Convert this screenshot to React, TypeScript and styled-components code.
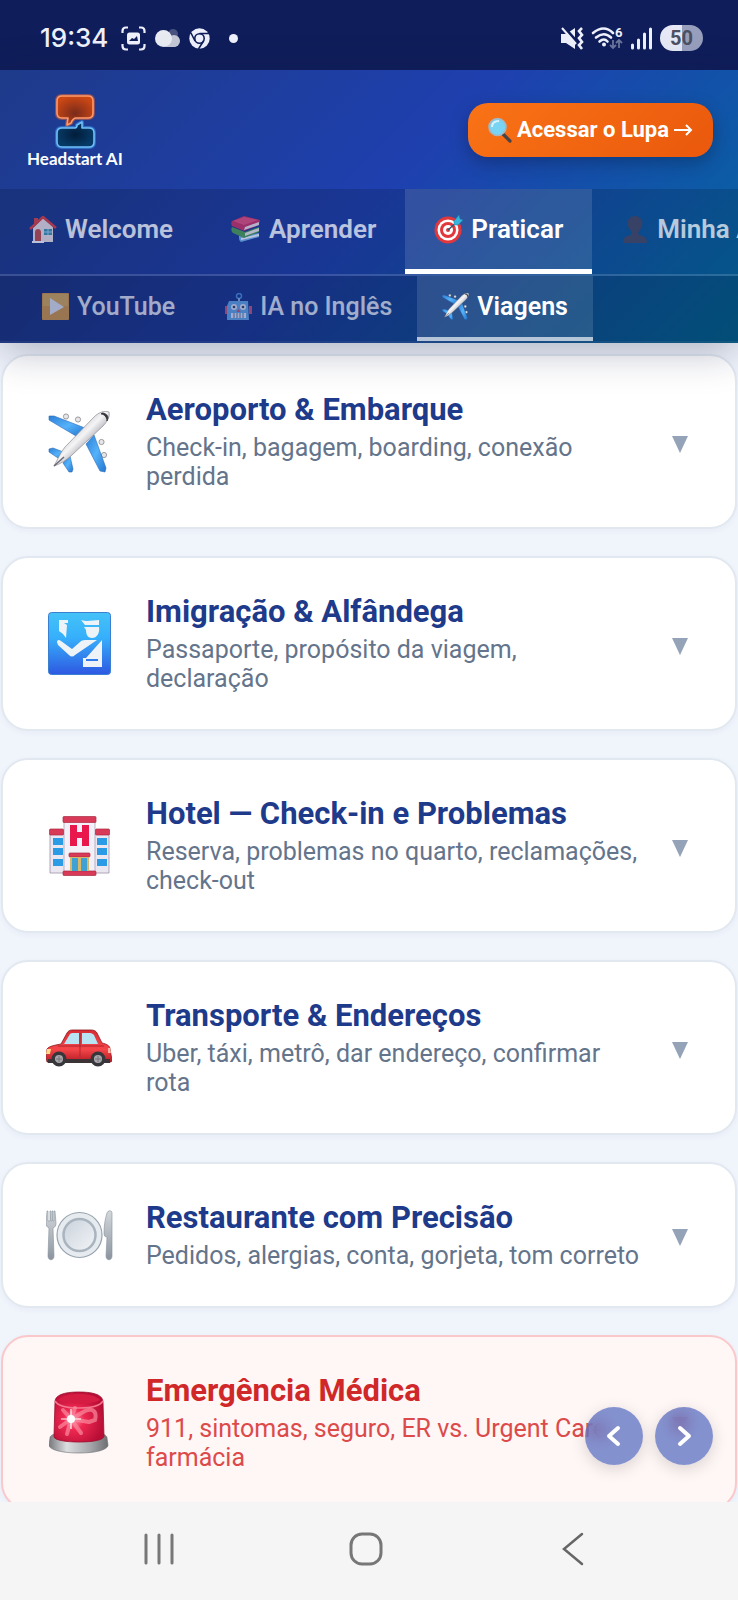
import { ReactNode, useState } from "react";
import styled, { createGlobalStyle } from "styled-components";

const GlobalStyle = createGlobalStyle`
  * {
    box-sizing: border-box;
  }
  body {
    margin: 0;
    background: #f0f4fb;
    font-family: Roboto, "Noto Sans", sans-serif;
  }
  button {
    border: 0;
    padding: 0;
    font-family: inherit;
    cursor: pointer;
  }
  svg {
    display: block;
    flex-shrink: 0;
  }
`;

const Screen = styled.div`
  display: flex;
  flex-direction: column;
  height: 100vh;
  overflow: hidden;
`;

/* ---------- status bar ---------- */
const StatusBar = styled.div`
  display: flex;
  align-items: center;
  justify-content: space-between;
  height: 70px;
  flex-shrink: 0;
  padding: 6px 35px 0 40px;
  background: #0f1d5a;
  color: #eef1fb;
`;
const StatusGroup = styled.div<{ $gap: number }>`
  display: flex;
  align-items: center;
  gap: ${({ $gap }) => $gap}px;
`;
const Clock = styled.span`
  margin-right: 4px;
  font-family: Inter, sans-serif;
  font-size: 26px;
  font-weight: 500;
  line-height: 32px;
`;
const Dot = styled.span`
  width: 9px;
  height: 9px;
  margin-left: 10px;
  border-radius: 50%;
  background: #eef1fb;
`;
const Battery = styled.span`
  width: 43px;
  height: 26px;
  border-radius: 13px;
  background: linear-gradient(90deg, #e6e9f5 50%, #989fbd 50%);
  color: #4c5062;
  font-size: 20px;
  font-weight: 700;
  line-height: 26px;
  text-align: center;
`;

/* ---------- header ---------- */
const Header = styled.header`
  position: relative;
  z-index: 2;
  flex-shrink: 0;
  background: linear-gradient(135deg, #1e3a8a 0%, #1e40af 50%, #0369a1 100%);
  box-shadow: 0 8px 38px rgba(20, 25, 70, 0.3);
`;
const Brand = styled.div`
  display: flex;
  align-items: center;
  justify-content: space-between;
  height: 119px;
  padding: 0 25px 0 27px;
`;
const Logo = styled.a`
  display: flex;
  flex-direction: column;
  align-items: center;
  color: #fff;
  font-family: Lato, sans-serif;
  font-size: 17px;
  font-weight: 700;
  line-height: 18px;
  text-decoration: none;
`;
const LupaButton = styled.button`
  display: flex;
  align-items: center;
  gap: 5px;
  height: 54px;
  padding: 0 20px;
  border-radius: 20px;
  background: linear-gradient(135deg, #f97316, #ea580c);
  box-shadow: 0 6px 18px rgba(0, 0, 0, 0.25);
  color: #fff;
  font-size: 22px;
  font-weight: 700;
  white-space: nowrap;
`;
const Tabs = styled.nav<{ $sub?: boolean }>`
  display: flex;
  overflow: hidden;
  padding-left: ${({ $sub }) => ($sub ? 17 : 0)}px;
  border-bottom: 2px solid rgba(255, 255, 255, ${({ $sub }) => ($sub ? 0.06 : 0.15)});
  background: rgba(0, 0, 0, ${({ $sub }) => ($sub ? 0.25 : 0.15)});
`;
const Tab = styled.a<{ $active?: boolean; $sub?: boolean }>`
  display: flex;
  align-items: center;
  flex-shrink: 0;
  gap: 8px;
  height: ${({ $sub }) => ($sub ? 65 : 85)}px;
  padding: 0 ${({ $sub }) => ($sub ? 25 : 29)}px;
  border-bottom: ${({ $sub }) => ($sub ? 4 : 5)}px solid
    ${({ $active, $sub }) =>
      !$active ? "transparent" : $sub ? "rgba(255, 255, 255, 0.7)" : "#fff"};
  background: ${({ $active }) =>
    $active ? "rgba(255, 255, 255, 0.12)" : "transparent"};
  background-clip: padding-box;
  color: #fff;
  font-size: ${({ $sub }) => ($sub ? 25 : 26)}px;
  font-weight: ${({ $sub, $active }) => ($sub && !$active ? 500 : 600)};
  text-decoration: none;
  white-space: nowrap;

  > * {
    opacity: ${({ $active, $sub }) => ($active ? 1 : $sub ? 0.6 : 0.7)};
  }
`;

/* ---------- topic list ---------- */
const Content = styled.main`
  position: relative;
  flex: 1;
  min-height: 0;
`;
const TopicList = styled.div`
  display: flex;
  flex-direction: column;
  gap: 27px;
  height: 100%;
  padding: 11px 1px 27px;
  overflow-y: auto;
  scrollbar-width: none;
`;
const TopicCard = styled.button<{ $urgent?: boolean }>`
  display: flex;
  align-items: center;
  flex-shrink: 0;
  gap: 20px;
  width: 100%;
  padding: 36px;
  border: 2px solid ${({ $urgent }) => ($urgent ? "#fac8ca" : "#e2e8f0")};
  border-radius: 27px;
  background: ${({ $urgent }) => ($urgent ? "#fff6f6" : "#fff")};
  box-shadow: 0 2px 6px rgba(30, 58, 138, 0.04);
  color: ${({ $urgent }) => ($urgent ? "#dc4a4a" : "#64748b")};
  text-align: left;
`;
const TopicIcon = styled.span`
  display: flex;
  justify-content: center;
  flex-shrink: 0;
  width: 80px;
  margin-right: 7px;
`;
const TopicText = styled.span`
  display: flex;
  flex-direction: column;
  flex: 1;
  gap: 5px;
  min-width: 0;
`;
const TopicTitle = styled.span<{ $urgent?: boolean }>`
  color: ${({ $urgent }) => ($urgent ? "#d02828" : "#1e3a8a")};
  font-size: 31px;
  font-weight: 700;
  line-height: 36px;
`;
const TopicDesc = styled.span`
  font-size: 25px;
  line-height: 29px;
`;
const Chevron = styled.span`
  display: flex;
  justify-content: center;
  flex-shrink: 0;
  width: 38px;
  padding-top: 5px;
`;
const Pager = styled.div`
  position: absolute;
  right: 25px;
  bottom: 37px;
  display: flex;
  gap: 12px;
`;
const PagerButton = styled.button`
  display: flex;
  align-items: center;
  justify-content: center;
  width: 58px;
  height: 58px;
  border-radius: 50%;
  background: rgba(30, 64, 175, 0.55);
  backdrop-filter: blur(8px);
  box-shadow: 0 4px 16px rgba(0, 0, 0, 0.15);
`;

/* ---------- system navigation ---------- */
const SystemNav = styled.div`
  display: flex;
  align-items: center;
  justify-content: space-around;
  flex-shrink: 0;
  height: 98px;
  padding: 0 62px 4px 56px;
  background: #f5f5f5;
`;
const SystemButton = styled.button`
  display: flex;
  justify-content: center;
  width: 60px;
  background: none;
`;

/* ---------- drawings ---------- */
type IconProps = { size?: number };

const Plane = ({ size = 62 }: IconProps) => (
  <svg width={size} height={size} viewBox="0 0 62 62" aria-hidden>
    <defs>
      <linearGradient id="wing" x1="0" y1="0" x2="1" y2="1">
        <stop offset="0" stopColor="#2c7fd6" />
        <stop offset="0.5" stopColor="#55b2fa" />
        <stop offset="1" stopColor="#2375cf" />
      </linearGradient>
      <linearGradient id="hull" x1="0.3" y1="0.3" x2="0.7" y2="0.7">
        <stop offset="0" stopColor="#c9c9cf" />
        <stop offset="0.45" stopColor="#f4f4f5" />
        <stop offset="1" stopColor="#8e8a96" />
      </linearGradient>
    </defs>
    <g fill="#e6e6e9" stroke="#85858c" strokeWidth="0.8">
      <circle cx="18" cy="5.500" r="2.600" />
      <circle cx="30" cy="8.500" r="2.600" />
      <circle cx="53.500" cy="31" r="2.600" />
      <circle cx="56" cy="44" r="2.600" />
    </g>
    <g fill="url(#wing)" stroke="#2a6cb8" strokeWidth="0.6">
      <path d="M1 5h5l31 12-9 8L1 9z" />
      <path d="M57 61l-5-1-14-27 8-9 12 33z" />
      <path d="M1 38l4-1 13 5-5 7L1 41z" />
      <path d="M24 61h-3l-6-9 7-7 3 13z" />
    </g>
    <path
      d="M61 1C56-1 50 2 46 6L17 36C12 42 9 50 6 55c6-2 13-6 18-11l31-29c5-5 7-10 6-14z"
      fill="url(#hull)"
      stroke="#8b8b92"
      strokeWidth="0.7"
    />
    <path d="M53 3c3 0 6 3 6 7l1-3c0-3-3-5-6-5z" fill="#33343a" stroke="#33343a" strokeWidth="0.8" />
    <path d="M16 46L6 55" stroke="#6e6b76" strokeWidth="1.5" />
  </svg>
);

const Customs = () => (
  <svg width="63" height="63" viewBox="0 0 63 63" aria-hidden>
    <defs>
      <linearGradient id="sign" x1="0" y1="0" x2="0" y2="1">
        <stop offset="0" stopColor="#45c2f8" />
        <stop offset="0.4" stopColor="#36b0fb" />
        <stop offset="1" stopColor="#2e58e2" />
      </linearGradient>
    </defs>
    <rect x="0.5" y="0.5" width="62" height="62" rx="3" fill="url(#sign)" stroke="#3b7fd0" />
    <g fill="#eef3f7">
      <path d="M11 8h9v3h-4l3 2-1 13-3-4-4-3z" />
      <path d="M33 8c6 2 12 0 18 0v5H37z" />
      <path d="M36 15h15c1 6-2 11-7 11-4 0-6-3-6-8z" />
      <path d="M9 30c0-2 2-3 4-1l11 8 8-7c2-2 4-2 8-2h9L27 43c-2 2-4 2-6 0L10 33z" />
      <path d="M54 28v27H35V46h3zM38 47h12v2H38z" fillRule="evenodd" />
    </g>
  </svg>
);

const Hotel = () => (
  <svg width="61" height="60" viewBox="0 0 61 60" aria-hidden>
    <path d="M1 18h59v39H1z" fill="#ebe7f1" stroke="#9c93a8" strokeWidth="0.8" />
    <path d="M15 5h31v51H15z" fill="#f4f0f7" stroke="#aaa2b4" strokeWidth="0.8" />
    <g fill="#d93a57" stroke="#a92b45" strokeWidth="0.7">
      <rect x="14" y="0.5" width="33" height="6" rx="1" />
      <rect x="0.5" y="13" width="14" height="6" rx="1" />
      <rect x="46.5" y="13" width="14" height="6" rx="1" />
      <rect x="20" y="37" width="21" height="4" rx="1" />
      <rect x="14" y="55" width="33" height="4.5" rx="1" />
    </g>
    <path d="M21 9h7v7h5V9h7v21h-7v-8h-5v8h-7z" fill="#e8184c" />
    <path
      d="M4 22h10v7H4zM4 32h10v7H4zM4 43h10v7H4zM48 22h10v7H48zM48 32h10v7H48zM48 43h10v7H48z"
      fill="#2c9be6"
    />
    <path d="M21 41h19v14H21z" fill="#d8b96b" />
    <path d="M23 42h6v13h-6zM32 42h6v13h-6z" fill="#3fa1d4" />
  </svg>
);

const Car = () => (
  <svg width="66" height="38" viewBox="0 0 66 38" aria-hidden>
    <defs>
      <linearGradient id="paint" x1="0" y1="0" x2="0" y2="1">
        <stop offset="0" stopColor="#d92b33" />
        <stop offset="0.6" stopColor="#f5474a" />
        <stop offset="1" stopColor="#b51a24" />
      </linearGradient>
    </defs>
    <path
      d="M1 33l-1-5 1-8c2-3 9-4 14-5l6-11c1-2 3-3 5-3h19c3 0 5 1 6 3l5 10c5 1 8 3 8 6l2 11c0 2-1 2-3 2z"
      fill="url(#paint)"
      stroke="#8d1820"
      strokeWidth="0.8"
    />
    <path d="M2 30h62v4H2z" fill="#3b3336" />
    <path d="M18 15l6-10c1-1 2-1 3-1h6v11zM36 4h8c2 0 3 1 4 2l4 9H36z" fill="#b8e3f2" />
    <path d="M34 4v24M12 17h46" stroke="#b3252e" strokeWidth="1" />
    <path d="M1 20h4l-1 5H0z" fill="#ffd88a" />
    <path d="M62 19h2l1 5h-3z" fill="#ffb3a0" />
    <g fill="#a9a6ab" stroke="#37373b" strokeWidth="3.5">
      <circle cx="13" cy="30" r="5.8" />
      <circle cx="52" cy="30" r="5.8" />
    </g>
    <path d="M10 30h6M13 27v6M49 30h6M52 27v6" stroke="#77757b" />
  </svg>
);

const Plate = () => (
  <svg width="67" height="51" viewBox="0 0 67 51" aria-hidden>
    <defs>
      <linearGradient id="china" x1="0" y1="0" x2="1" y2="1">
        <stop offset="0" stopColor="#c9d1da" />
        <stop offset="1" stopColor="#f2f5f8" />
      </linearGradient>
      <linearGradient id="steel" x1="0" y1="0" x2="0" y2="1">
        <stop offset="0" stopColor="#d4d8dc" />
        <stop offset="1" stopColor="#8b949f" />
      </linearGradient>
    </defs>
    <circle cx="33.5" cy="25" r="22.5" fill="#e6ebf0" stroke="#98a3af" strokeWidth="1.2" />
    <circle cx="33.5" cy="25" r="16" fill="url(#china)" stroke="#aab4bf" strokeWidth="2.5" />
    <g fill="url(#steel)" stroke="#87909a" strokeWidth="0.6">
      <path d="M1 1h1v10h2V1h1v10h1V1h1v10h1V1h1l1 12c0 3-1 4-3 5l1 28c0 5-6 5-6 0l1-28c-2-1-3-2-3-5z" />
      <path d="M66 3c0-3-4-3-5 0-2 6-3 13-3 20 0 3 1 4 3 4l-1 19c0 5 6 5 6 0z" />
    </g>
  </svg>
);

const Siren = () => (
  <svg width="60" height="63" viewBox="0 0 60 63" aria-hidden>
    <defs>
      <linearGradient id="base" x1="0" y1="0" x2="1" y2="0">
        <stop offset="0" stopColor="#77797d" />
        <stop offset="0.3" stopColor="#dcdddf" />
        <stop offset="0.7" stopColor="#a5a7aa" />
        <stop offset="1" stopColor="#6c6e72" />
      </linearGradient>
      <radialGradient id="glow" cx="0.4" cy="0.55" r="0.6">
        <stop offset="0" stopColor="#ff8fa5" />
        <stop offset="0.35" stopColor="#ee2850" />
        <stop offset="1" stopColor="#b80e36" />
      </radialGradient>
    </defs>
    <path d="M1 47c0-4 8-6 29-6s28 2 28 6l1 7c0 5-13 8-29 8S0 59 0 54z" fill="url(#base)" stroke="#6c6e72" strokeWidth="0.6" />
    <path d="M6 11C6 3 18 1 30 1s24 2 24 10l1 34c0 4-11 6-25 6S4 49 5 45z" fill="url(#glow)" stroke="#99102d" strokeWidth="0.8" />
    <path d="M6 10c3 5 12 7 24 7s21-2 24-7" fill="none" stroke="#f4758d" strokeWidth="1.5" />
    <path d="M9 9C15 1 45 1 51 9c-8 5-34 5-42 0z" fill="#d61c42" />
    <path
      d="M22 28l-8-9M22 28l4-11M22 28l14-8c9-4 12 2 10 9l-6 2M22 28l18 3M22 28l10 14M22 28l-4 15M22 28l-11 8"
      fill="none"
      stroke="#f98a9e"
      strokeWidth="4"
      strokeLinecap="round"
      opacity="0.7"
    />
    <circle cx="22" cy="28" r="4" fill="#fff" />
    <path d="M22 18v20M12 28h20" stroke="#fff" strokeWidth="1.2" />
  </svg>
);

const House = () => (
  <svg width="28" height="28" viewBox="0 0 28 28" aria-hidden>
    <path d="M4 13v14h20V12L14 3z" fill="#f4e6e4" />
    <path d="M5 3h4v6H5z" fill="#d8443c" />
    <path d="M1 14L14 2l13 11" fill="none" stroke="#e23b3b" strokeWidth="2.5" strokeLinejoin="round" />
    <path d="M6 27V17c0-4 6-4 6 0v10z" fill="#c84a45" />
    <path d="M15 14h8v6h-8z" fill="#3d93b3" />
    <path d="M19 14v6M15 17h8" stroke="#a9dbe8" />
    <path d="M3 27h12" stroke="#fff" strokeWidth="2" />
  </svg>
);

const Books = () => (
  <svg width="30" height="28" viewBox="0 0 30 28" aria-hidden>
    <path d="M8 21l20-3v4l-18 5c-2-1-2-4-2-6z" fill="#7cb8ec" />
    <path d="M10 23l18-4v2l-18 4z" fill="#fff" />
    <path d="M1 12l13 5 14-5v5l-15 6-11-5c-2-2-2-4-1-6z" fill="#4f9f48" />
    <path d="M14 18l14-5v3l-14 5z" fill="#f3f0e0" />
    <path d="M1 6L13 1l16 4-1 5-15 6L1 11c-1-2-1-4 0-5z" fill="#d12d5a" />
    <path d="M14 12l14-5v3l-15 5z" fill="#f5ebe6" />
    <path d="M2 6l11-4 14 3-14 5z" fill="#ec4d73" />
  </svg>
);

const Target = () => (
  <svg width="29" height="29" viewBox="0 0 29 29" aria-hidden>
    <circle cx="14" cy="15" r="13.5" fill="#e2383d" />
    <circle cx="14" cy="15" r="10.5" fill="#fff" />
    <circle cx="14" cy="15" r="8" fill="#e2383d" />
    <circle cx="14" cy="15" r="5" fill="#fff" />
    <circle cx="14" cy="15" r="2" fill="#e2383d" />
    <path d="M14 15L24 6" stroke="#31576f" strokeWidth="1.5" />
    <path d="M20 6l5-6 1 4 3 1-5 5-4 0z" fill="#36b5dc" stroke="#1c7fa8" strokeWidth="0.5" />
  </svg>
);

const Person = () => (
  <svg width="28" height="28" viewBox="-2 0 28 28" aria-hidden>
    <path d="M0 28c0-6 3-7 8-8 1-1 1-3 0-4C2 10 4 1 12 1s10 9 4 15c-1 1-1 3 0 4 5 1 8 2 8 8z" fill="#4b3f56" />
  </svg>
);

const PlayBox = () => (
  <svg width="27" height="27" viewBox="0 0 27 27" aria-hidden>
    <rect width="27" height="27" rx="1" fill="#f0a63a" />
    <rect x="1" y="1" width="25" height="12" fill="#f5bb4e" />
    <path d="M8 5l14 9L8 22z" fill="#fff" />
  </svg>
);

const Robot = () => (
  <svg width="27" height="28" viewBox="0 0 27 28" aria-hidden>
    <circle cx="14" cy="3" r="2.5" fill="none" stroke="#4e9be8" strokeWidth="1.5" />
    <path d="M14 5v4" stroke="#9cc3e6" strokeWidth="2" />
    <path d="M0 13h3v8H0zM24 13h3v8h-3z" fill="#e2546b" />
    <path d="M4 8h19l1 19H2V13z" fill="#6fb5f0" />
    <circle cx="9" cy="14" r="3" fill="#fff" />
    <circle cx="18" cy="14" r="3" fill="#fff" />
    <circle cx="9" cy="14" r="1.3" fill="#345" />
    <circle cx="18" cy="14" r="1.3" fill="#345" />
    <path d="M13.5 16l2 3h-4z" fill="#e2546b" />
    <path d="M6 20h15v5H6z" fill="#fff" />
    <path d="M9 20v5M12 20v5M15 20v5M18 20v5" stroke="#5d7fa6" />
  </svg>
);

const Magnifier = () => (
  <svg width="24" height="26" viewBox="0 0 24 26" aria-hidden>
    <path d="M15 17l7 7" stroke="#4a4347" strokeWidth="3.2" strokeLinecap="round" />
    <circle cx="9.500" cy="10" r="8.500" fill="#79d3f2" stroke="#a9b4bc" strokeWidth="1.6" />
    <path d="M4 10c0-4 3-6 7-6" stroke="#d7f4fd" strokeWidth="2" fill="none" />
  </svg>
);

const topBubble =
  "M9 4h26q5 0 5 5v12q0 5-5 5H23q-3 0-5 5l-4 2 1-7H9q-5 0-5-5V9q0-5 5-5z";
const bottomBubble =
  "M9 36h13q2 0 2-3l5-3v6h7q5 0 5 5v9q0 5-5 5H9q-5 0-5-5v-9q0-5 5-5z";

const LogoMark = () => (
  <svg width="44" height="58" viewBox="0 0 44 58" aria-hidden>
    <defs>
      <radialGradient id="orange" cx="0.5" cy="0.6" r="0.6">
        <stop offset="0" stopColor="#7a2b1b" />
        <stop offset="1" stopColor="#cc4714" />
      </radialGradient>
      <radialGradient id="navy">
        <stop offset="0" stopColor="#021c3a" />
        <stop offset="1" stopColor="#063a66" />
      </radialGradient>
    </defs>
    <g strokeLinejoin="round">
      <path d={topBubble} fill="none" stroke="#f0642a" strokeWidth="4" opacity="0.5" />
      <path d={topBubble} fill="url(#orange)" stroke="#ff9a68" strokeWidth="1.6" />
      <path d={bottomBubble} fill="none" stroke="#3f9cf0" strokeWidth="4" opacity="0.5" />
      <path d={bottomBubble} fill="url(#navy)" stroke="#6fc0fa" strokeWidth="1.6" />
    </g>
  </svg>
);

const Arrow = () => (
  <svg width="19" height="14" viewBox="0 0 19 14" aria-hidden>
    <path d="M0 7h17M12 2l5 5-5 5" fill="none" stroke="#fff" strokeWidth="2" />
  </svg>
);

const CaptureIcon = () => (
  <svg width="25" height="25" viewBox="0 0 25 25" fill="none" aria-hidden>
    <path
      d="M1.5 7V5q0-3.5 3.5-3.5h2M18 1.5h2q3.5 0 3.5 3.5v2M23.5 18v2q0 3.5-3.5 3.5h-2M7 23.5H5q-3.5 0-3.5-3.5v-2"
      stroke="#eef1fb"
      strokeWidth="2.2"
    />
    <rect x="6" y="6.5" width="13" height="12" rx="2.5" fill="#eef1fb" />
    <path d="M8 15l3-3 2 1 3-3 1 5z" fill="#0f1d5a" />
  </svg>
);

const CloudIcon = () => (
  <svg width="25" height="20" viewBox="0 0 25 20" aria-hidden>
    <circle cx="18" cy="6" r="5" fill="#47527f" />
    <circle cx="19" cy="13" r="6" fill="#c3c7d6" />
    <rect x="8" y="12" width="14" height="7" rx="3.5" fill="#c3c7d6" />
    <circle cx="8.5" cy="10.5" r="8.5" fill="#e9ebf3" />
  </svg>
);

const ChromeIcon = () => (
  <svg width="21" height="21" viewBox="0 0 21 21" aria-hidden>
    <circle cx="10.5" cy="10.5" r="10.2" fill="#eef1fb" />
    <circle cx="10.5" cy="10.5" r="4.7" fill="none" stroke="#0f1d5a" strokeWidth="1.6" />
    <path d="M10.5 5.5H20M6 13L2 5M14.5 13l-5 8" stroke="#0f1d5a" strokeWidth="1.6" />
  </svg>
);

const MuteIcon = () => (
  <svg width="24" height="23" viewBox="0 0 24 23" aria-hidden>
    <path d="M1 7h5l9-6v21l-9-6H1z" fill="#eef1fb" />
    <path d="M2 -2l16 18" stroke="#0f1d5a" strokeWidth="3" />
    <path d="M2 1l14 16" stroke="#eef1fb" strokeWidth="2" />
    <path d="M22 1l-3 3 3 4-3 3 3 4-3 3 3 4" fill="none" stroke="#eef1fb" strokeWidth="2.6" />
  </svg>
);

const WifiIcon = () => (
  <svg width="33" height="24" viewBox="0 0 33 24" overflow="visible" aria-hidden>
    <g fill="none" stroke="#eef1fb" strokeWidth="2.6" strokeLinecap="round">
      <path d="M2 7q11-9 20 0" />
      <path d="M5 11.5q8-6.5 15 0" />
      <path d="M8.500 15.5q4.5-4 8 0" />
    </g>
    <circle cx="13" cy="18.5" r="2" fill="#eef1fb" />
    <text x="24" y="11" fontFamily="Roboto, sans-serif" fontSize="13" fontWeight="700" fill="#eef1fb">
      6
    </text>
    <path d="M22 14v8M19 19l3 3 3-3M28 22v-8M25 17l3-3 3 3" stroke="#6b749c" strokeWidth="1.8" fill="none" />
  </svg>
);

const SignalIcon = () => (
  <svg width="22" height="23" viewBox="0 0 22 23" aria-hidden>
    <path
      d="M1.500 21v-3M7.500 21v-8M13.500 21V7M19.500 21V2"
      stroke="#eef1fb"
      strokeWidth="3"
      strokeLinecap="round"
    />
  </svg>
);

type TabItem = { label: string; icon: ReactNode };

const mainTabs: TabItem[] = [
  { label: "Welcome", icon: <House /> },
  { label: "Aprender", icon: <Books /> },
  { label: "Praticar", icon: <Target /> },
  { label: "Minha Área", icon: <Person /> },
];

const subTabs: TabItem[] = [
  { label: "YouTube", icon: <PlayBox /> },
  { label: "IA no Inglês", icon: <Robot /> },
  { label: "Viagens", icon: <Plane size={27} /> },
];

type Topic = { title: string; desc: string; icon: ReactNode; urgent?: boolean };

const topics: Topic[] = [
  {
    title: "Aeroporto & Embarque",
    desc: "Check-in, bagagem, boarding, conexão perdida",
    icon: <Plane />,
  },
  {
    title: "Imigração & Alfândega",
    desc: "Passaporte, propósito da viagem, declaração",
    icon: <Customs />,
  },
  {
    title: "Hotel — Check-in e Problemas",
    desc: "Reserva, problemas no quarto, reclamações, check-out",
    icon: <Hotel />,
  },
  {
    title: "Transporte & Endereços",
    desc: "Uber, táxi, metrô, dar endereço, confirmar rota",
    icon: <Car />,
  },
  {
    title: "Restaurante com Precisão",
    desc: "Pedidos, alergias, conta, gorjeta, tom correto",
    icon: <Plate />,
  },
  {
    title: "Emergência Médica",
    desc: "911, sintomas, seguro, ER vs. Urgent Care, farmácia",
    icon: <Siren />,
    urgent: true,
  },
];

export default function App() {
  const [mainTab, setMainTab] = useState("Praticar");
  const [subTab, setSubTab] = useState("Viagens");

  return (
    <Screen>
      <GlobalStyle />
      <StatusBar>
        <StatusGroup $gap={9}>
          <Clock>19:34</Clock>
          <CaptureIcon />
          <CloudIcon />
          <ChromeIcon />
          <Dot />
        </StatusGroup>
        <StatusGroup $gap={7}>
          <MuteIcon />
          <WifiIcon />
          <SignalIcon />
          <Battery>50</Battery>
        </StatusGroup>
      </StatusBar>

      <Header>
        <Brand>
          <Logo href="#">
            <LogoMark />
            Headstart AI
          </Logo>
          <LupaButton type="button">
            <Magnifier />
            Acessar o Lupa
            <Arrow />
          </LupaButton>
        </Brand>
        <Tabs>
          {mainTabs.map(({ label, icon }) => (
            <Tab
              key={label}
              href="#"
              $active={label === mainTab}
              onClick={() => setMainTab(label)}
            >
              {icon}
              <span>{label}</span>
            </Tab>
          ))}
        </Tabs>
        <Tabs $sub>
          {subTabs.map(({ label, icon }) => (
            <Tab
              key={label}
              href="#"
              $sub
              $active={label === subTab}
              onClick={() => setSubTab(label)}
            >
              {icon}
              <span>{label}</span>
            </Tab>
          ))}
        </Tabs>
      </Header>

      <Content>
        <TopicList>
          {topics.map(({ title, desc, icon, urgent }) => (
            <TopicCard key={title} type="button" aria-expanded={false} $urgent={urgent}>
              <TopicIcon>{icon}</TopicIcon>
              <TopicText>
                <TopicTitle $urgent={urgent}>{title}</TopicTitle>
                <TopicDesc>{desc}</TopicDesc>
              </TopicText>
              <Chevron>
                <svg width="16" height="17" viewBox="0 0 16 17" aria-hidden>
                  <path d="M0 0h16L8 17z" fill={urgent ? "#dc4a4a" : "#94a3b8"} />
                </svg>
              </Chevron>
            </TopicCard>
          ))}
        </TopicList>
        <Pager>
          <PagerButton type="button" aria-label="Anterior">
            <svg width="24" height="24" viewBox="0 0 24 24" fill="none" aria-hidden>
              <path d="M16 4l-9 8 9 8" stroke="#fff" strokeWidth="4" strokeLinecap="round" strokeLinejoin="round" />
            </svg>
          </PagerButton>
          <PagerButton type="button" aria-label="Próximo">
            <svg width="24" height="24" viewBox="0 0 24 24" fill="none" aria-hidden>
              <path d="M8 4l9 8-9 8" stroke="#fff" strokeWidth="4" strokeLinecap="round" strokeLinejoin="round" />
            </svg>
          </PagerButton>
        </Pager>
      </Content>

      <SystemNav>
        <SystemButton type="button" aria-label="Recentes">
          <svg width="34" height="34" viewBox="0 0 34 34" aria-hidden>
            <path d="M4 3v28M17 3v28M30 3v28" stroke="#777" strokeWidth="3" strokeLinecap="round" />
          </svg>
        </SystemButton>
        <SystemButton type="button" aria-label="Início">
          <svg width="34" height="34" viewBox="0 0 34 34" aria-hidden>
            <rect x="2" y="2" width="30" height="30" rx="11" fill="none" stroke="#777" strokeWidth="3" />
          </svg>
        </SystemButton>
        <SystemButton type="button" aria-label="Voltar">
          <svg width="34" height="34" viewBox="0 0 34 34" aria-hidden>
            <path d="M26 2L8 17l18 15" fill="none" stroke="#666" strokeWidth="2.5" strokeLinecap="round" />
          </svg>
        </SystemButton>
      </SystemNav>
    </Screen>
  );
}
